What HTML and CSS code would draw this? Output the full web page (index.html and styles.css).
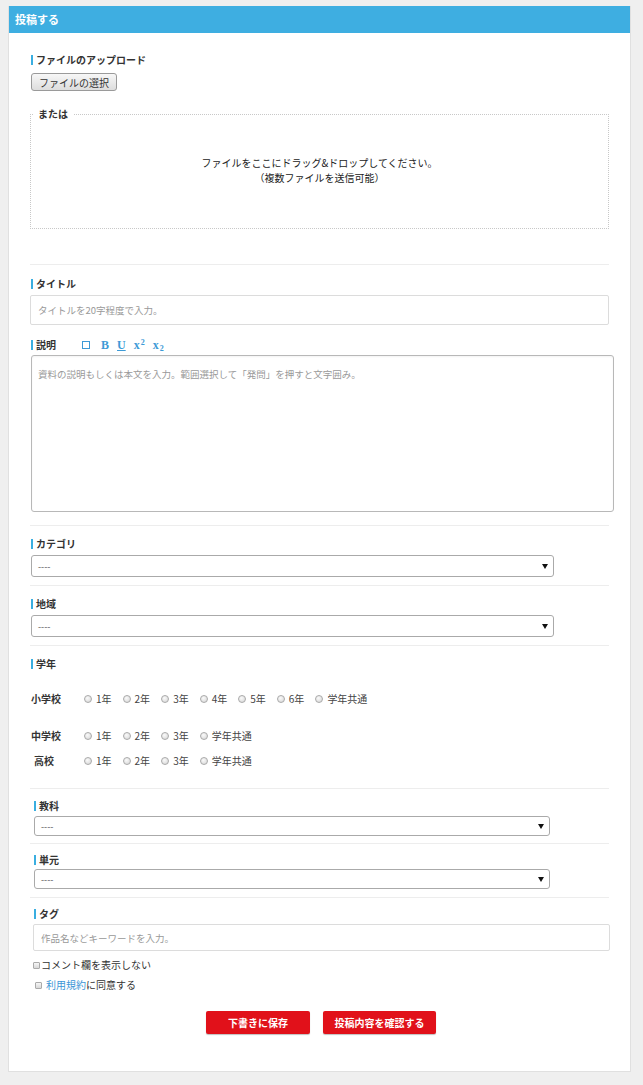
FILE: index.html
```html
<!DOCTYPE html>
<html lang="ja">
<head>
<meta charset="utf-8">
<title>投稿する</title>
<link rel="stylesheet" href="styles.css">
</head>
<body>
<div class="page">
  <div class="card">
    <div class="card-head">投稿する</div>
    <div class="card-body">

      <section class="sec sec-upload">
        <div class="lbl">ファイルのアップロード</div>
        <button class="file-btn" type="button">ファイルの選択</button>
        <fieldset class="drop">
          <legend>または</legend>
          <div class="drop-inner">
            <p>ファイルをここにドラッグ&amp;ドロップしてください。</p>
            <p>（複数ファイルを送信可能）</p>
          </div>
        </fieldset>
      </section>

      <section class="sec sec-text">
        <div class="lbl">タイトル</div>
        <input class="text-in" type="text" placeholder="タイトルを20字程度で入力。">
        <div class="lbl-row">
          <div class="lbl">説明</div>
          <div class="toolbar">
            <span class="tb-box"></span>
            <span class="tb">B</span>
            <span class="tb tb-u">U</span>
            <span class="tb">x<sup>2</sup></span>
            <span class="tb">x<sub>2</sub></span>
          </div>
        </div>
        <textarea class="desc" placeholder="資料の説明もしくは本文を入力。範囲選択して「発問」を押すと文字囲み。"></textarea>
      </section>

      <section class="sec sec-sel">
        <div class="lbl">カテゴリ</div>
        <div class="select"><span>----</span><span class="arrow"></span></div>
      </section>

      <section class="sec sec-sel">
        <div class="lbl">地域</div>
        <div class="select"><span>----</span><span class="arrow"></span></div>
      </section>

      <section class="sec sec-grade">
        <div class="lbl">学年</div>
        <div class="grade-row row-1">
          <span class="grade-name">小学校</span>
          <label class="opt"><input type="radio" name="es"><span>1年</span></label>
          <label class="opt"><input type="radio" name="es"><span>2年</span></label>
          <label class="opt"><input type="radio" name="es"><span>3年</span></label>
          <label class="opt"><input type="radio" name="es"><span>4年</span></label>
          <label class="opt"><input type="radio" name="es"><span>5年</span></label>
          <label class="opt"><input type="radio" name="es"><span>6年</span></label>
          <label class="opt"><input type="radio" name="es"><span>学年共通</span></label>
        </div>
        <div class="grade-row row-2">
          <span class="grade-name">中学校</span>
          <label class="opt"><input type="radio" name="js"><span>1年</span></label>
          <label class="opt"><input type="radio" name="js"><span>2年</span></label>
          <label class="opt"><input type="radio" name="js"><span>3年</span></label>
          <label class="opt"><input type="radio" name="js"><span>学年共通</span></label>
        </div>
        <div class="grade-row row-3">
          <span class="grade-name grade-hs">高校</span>
          <label class="opt"><input type="radio" name="hs"><span>1年</span></label>
          <label class="opt"><input type="radio" name="hs"><span>2年</span></label>
          <label class="opt"><input type="radio" name="hs"><span>3年</span></label>
          <label class="opt"><input type="radio" name="hs"><span>学年共通</span></label>
        </div>
      </section>

      <section class="sec sec-low sec-subject">
        <div class="lbl">教科</div>
        <div class="select select-low"><span>----</span><span class="arrow"></span></div>
      </section>

      <section class="sec sec-low sec-unit">
        <div class="lbl">単元</div>
        <div class="select select-low"><span>----</span><span class="arrow"></span></div>
      </section>

      <section class="sec sec-low sec-tag">
        <div class="lbl">タグ</div>
        <input class="text-in tag-in" type="text" placeholder="作品名などキーワードを入力。">
        <label class="check check-1"><input type="checkbox"><span>コメント欄を表示しない</span></label>
        <label class="check check-2"><input type="checkbox"><span><a href="#" class="link">利用規約</a>に同意する</span></label>
        <div class="actions">
          <button class="btn btn-draft" type="button">下書きに保存</button>
          <button class="btn btn-confirm" type="button">投稿内容を確認する</button>
        </div>
      </section>

    </div>
  </div>
</div>
</body>
</html>
```
FILE: styles.css
```css
* { box-sizing: border-box; }

body {
  margin: 0;
  background: #efefef;
  font-family: "Noto Sans CJK JP", "Noto Sans", sans-serif;
  font-size: 10px;
  color: #333;
}

.page {
  padding: 6px 12px 15px 8px;
}

.card {
  background: #fff;
  border: 1px solid #e0e0e0;
  border-top: none;
}

.card-head {
  background: #3eaee1;
  height: 27px;
  line-height: 27px;
  padding-left: 6px;
  color: #fff;
  font-weight: bold;
  font-size: 11px;
}

.card-body {
  padding: 20px 21px 37px 21px;
}

.sec + .sec {
  border-top: 1px solid #ededed;
}

.lbl {
  display: flex;
  align-items: center;
  line-height: 14px;
  font-weight: bold;
  color: #333;
  margin-left: 1px;
}
.lbl::before {
  content: "";
  width: 2px;
  height: 10px;
  background: #3aaee0;
  margin-right: 3px;
}

/* upload */
.sec-upload {
  padding-bottom: 35px;
}
.file-btn {
  display: block;
  margin: 6px 0 0 1px;
  height: 18px;
  width: 86px;
  padding: 0;
  border: 1px solid #9a9a9a;
  border-radius: 3px;
  background: linear-gradient(#f7f7f7, #dddddd);
  font-family: inherit;
  font-size: 10px;
  color: #333;
}
.drop {
  margin: 16px 0 0 0;
  padding: 0 0 10px 0;
  border: 1px dotted #c8c8c8;
}
.drop legend {
  margin-left: 2px;
  padding: 0 5px;
  line-height: 14px;
  font-weight: bold;
  color: #333;
}
.drop-inner {
  height: 97px;
  display: flex;
  flex-direction: column;
  justify-content: center;
  align-items: center;
  text-align: center;
  font-size: 10px;
  line-height: 15px;
  color: #222;
}
.drop-inner p {
  margin: 0;
}

/* title / description */
.sec-text {
  padding: 12px 0 13px 0;
}
.text-in {
  display: block;
  width: 100%;
  height: 30px;
  margin-top: 4px;
  border: 1px solid #dcdcdc;
  border-radius: 2px;
  padding: 0 7px;
  font-family: inherit;
  font-size: 9.5px;
  color: #333;
  background: #fff;
}
.text-in::placeholder,
.desc::placeholder {
  color: #999;
}
.lbl-row {
  display: flex;
  align-items: center;
  margin-top: 13px;
}
.toolbar {
  display: flex;
  align-items: center;
  margin-left: 26px;
  gap: 8px;
  font-family: "Liberation Serif", "DejaVu Serif", serif;
  font-weight: bold;
  font-size: 12px;
  color: #3d9ad6;
  line-height: 14px;
}
.tb-box {
  width: 8px;
  height: 8px;
  border: 1px solid #3d9ad6;
  margin-right: 3px;
}
.tb {
  display: inline-block;
  line-height: 14px;
}
.tb-u {
  text-decoration: underline;
  text-underline-offset: 1px;
}
.tb sup,
.tb sub {
  font-size: 8px;
  line-height: 0;
  margin-left: 1px;
}
.tb sup { vertical-align: 4px; }
.tb sub { vertical-align: -2px; }

.desc {
  display: block;
  width: 583px;
  height: 157px;
  margin: 3px 0 0 1px;
  border: 1px solid #b8b8b8;
  border-radius: 3px;
  padding: 11px 6px;
  resize: none;
  font-family: inherit;
  font-size: 9.5px;
  line-height: 14px;
  color: #333;
  box-shadow: inset 0 1px 2px rgba(0,0,0,0.05);
}

/* selects */
.sec-sel {
  padding: 11px 0 8px 0;
}
.select {
  display: flex;
  align-items: center;
  justify-content: space-between;
  width: 523px;
  height: 22px;
  margin: 4px 0 0 1px;
  border: 1px solid #aaa;
  border-radius: 3px;
  padding: 0 5px 0 6px;
  color: #555;
  font-size: 9px;
  background: #fff;
}
.arrow {
  width: 0;
  height: 0;
  border-left: 3px solid transparent;
  border-right: 3px solid transparent;
  border-top: 5px solid #111;
}

/* grade */
.sec-grade {
  padding: 11px 0 20px 0;
}
.grade-row {
  display: flex;
  align-items: center;
  line-height: 14px;
}
.row-1 { margin-top: 21px; }
.row-2 { margin-top: 23px; }
.row-3 { margin-top: 11px; }
.grade-name {
  width: 53px;
  margin-left: 1px;
  font-weight: bold;
  color: #333;
}
.grade-hs {
  margin-left: 4px;
  width: 50px;
}
.opt {
  display: flex;
  align-items: center;
  margin-right: 11px;
  color: #444;
}
.opt input {
  appearance: none;
  -webkit-appearance: none;
  width: 8px;
  height: 8px;
  margin: 0 4px 0 0;
  border: 1px solid #aaa;
  border-radius: 50%;
  background: radial-gradient(circle at 40% 35%, #fafafa, #d4d4d4);
}

/* lower sections */
.sec-low .lbl {
  margin-left: 4px;
}
.sec-subject {
  padding: 10px 0 7px 0;
}
.sec-unit {
  padding: 9px 0 8px 0;
}
.select-low {
  width: 516px;
  height: 20px;
  margin-left: 4px;
}
.sec-subject .select-low { margin-top: 3px; }
.sec-unit .select-low { margin-top: 2px; }

.sec-tag {
  padding-top: 9px;
}
.tag-in {
  width: 577px;
  height: 27px;
  margin: 3px 0 0 3px;
}
.check {
  display: flex;
  align-items: center;
  line-height: 14px;
  color: #333;
}
.check input {
  appearance: none;
  -webkit-appearance: none;
  width: 7px;
  height: 7px;
  border: 1px solid #aaa;
  border-radius: 1px;
  background: linear-gradient(#f6f6f6, #d8d8d8);
}
.check-1 {
  margin: 7px 0 0 3px;
}
.check-1 input {
  margin: 0 1px 0 0;
}
.check-2 {
  margin: 6px 0 0 5px;
}
.check-2 input {
  margin: 0 4px 0 0;
}
.link {
  color: #3b95d6;
  text-decoration: none;
}

.actions {
  display: flex;
  justify-content: center;
  gap: 13px;
  margin-top: 19px;
  padding-left: 3px;
}
.btn {
  height: 23px;
  border: none;
  border-radius: 2px;
  background: #e1111a;
  color: #fff;
  font-family: inherit;
  font-weight: bold;
  font-size: 10px;
  padding: 0;
  box-shadow: 0 1px 1px rgba(0,0,0,0.25);
}
.btn-draft { width: 104px; }
.btn-confirm { width: 113px; }
```
